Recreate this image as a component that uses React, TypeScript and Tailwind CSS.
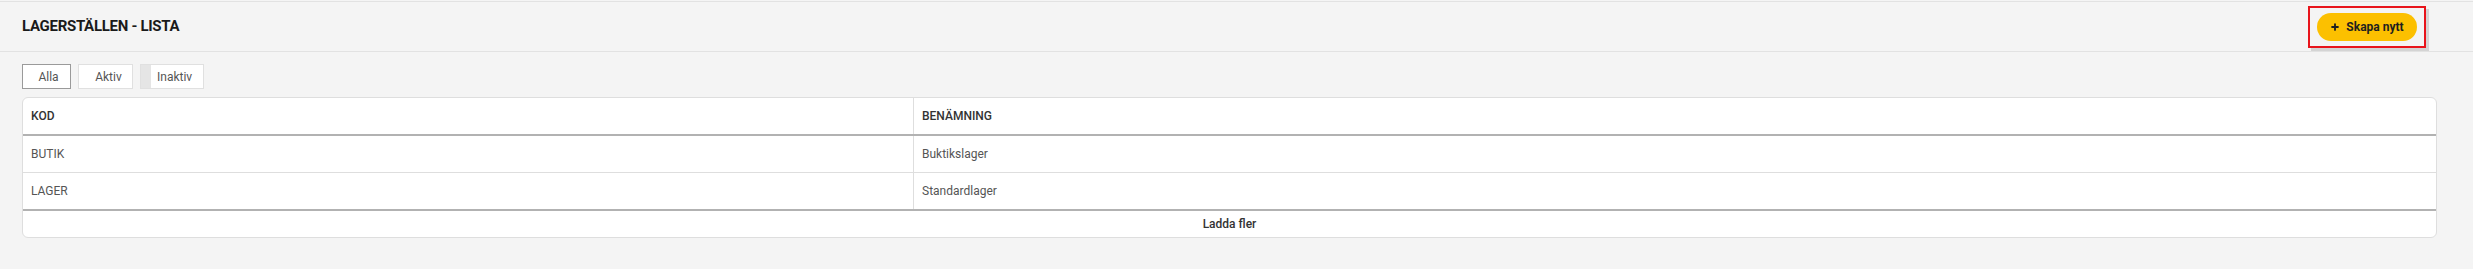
import { Plus } from 'lucide-react';

/* ── Data ───────────────────────────────────────────────────────────────── */
const ROWS = [
  { kod: 'BUTIK', namn: 'Buktikslager' },
  { kod: 'LAGER', namn: 'Standardlager' },
];

const FILTERS = ['Alla', 'Aktiv', 'Inaktiv'];

const App = () => {
  return (
    <div
      className="min-h-[269px] w-full bg-[#f4f4f4] pt-px"
      style={{ fontFamily: 'Roboto, "Liberation Sans", sans-serif' }}
    >
      {/* ── Header ──────────────────────────────────────────────────────── */}
      <div className="flex h-[51px] items-center justify-between border-y border-[#e2e2e2] pl-[22px] pr-[47px]">
        <h1 className="text-[15px] font-bold tracking-[-0.3px] text-[#1a1a1a]">LAGERSTÄLLEN - LISTA</h1>
        <div className="border-2 border-[#e8141b] px-[7px] py-[5px] shadow-[3px_3px_0_#d4d4d4]">
          <button className="flex h-[28px] w-[100px] items-center justify-center gap-[6px] rounded-full bg-[#fcc000] text-[12px] font-bold text-[#1f1f1f]">
            <Plus size={10} strokeWidth={4.5} />
            Skapa nytt
          </button>
        </div>
      </div>

      {/* ── Filters ─────────────────────────────────────────────────────── */}
      <div className="flex gap-[7px] pl-[22px] pt-[12px]">
        {FILTERS.map((f, i) => (
          <button
            key={f}
            className={`flex h-[25px] items-center border bg-white text-[12px] text-[#555] ${
              i === 0 ? 'w-[49px] justify-center border-[#9a9a9a] pl-[4px]' : 'border-[#e0e0e0]'
            } ${i === 1 ? 'w-[55px] justify-center pl-[6px]' : ''} ${i === 2 ? 'w-[64px]' : ''}`}
          >
            {i === 2 && <span className="mr-[6px] h-full w-[10px] bg-[#e5e5e5]" />}
            {f}
          </button>
        ))}
      </div>

      {/* ── Table ───────────────────────────────────────────────────────── */}
      <div className="ml-[22px] mt-[8px] w-[2415px] overflow-hidden rounded-[6px] border border-[#dedede] bg-white text-[12px]">
        <div className="flex h-[38px] items-center border-b-2 border-[#b2b2b2] font-medium text-[#333]">
          <div className="flex h-full w-[891px] items-center border-r border-[#dedede] pl-[8px]">KOD</div>
          <div className="pl-[8px]">BENÄMNING</div>
        </div>
        {ROWS.map((r, i) => (
          <div
            key={r.kod}
            className={`flex items-center text-[#555] ${
              i === ROWS.length - 1 ? 'h-[38px] border-b-2 border-[#b2b2b2]' : 'h-[37px] border-b border-[#dedede]'
            }`}
          >
            <div className="flex h-full w-[891px] items-center border-r border-[#dedede] pl-[8px]">{r.kod}</div>
            <div className="pl-[8px]">{r.namn}</div>
          </div>
        ))}
        <div className="flex h-[26px] items-center justify-center font-medium text-[#333]">Ladda fler</div>
      </div>
    </div>
  );
};

export default App;
